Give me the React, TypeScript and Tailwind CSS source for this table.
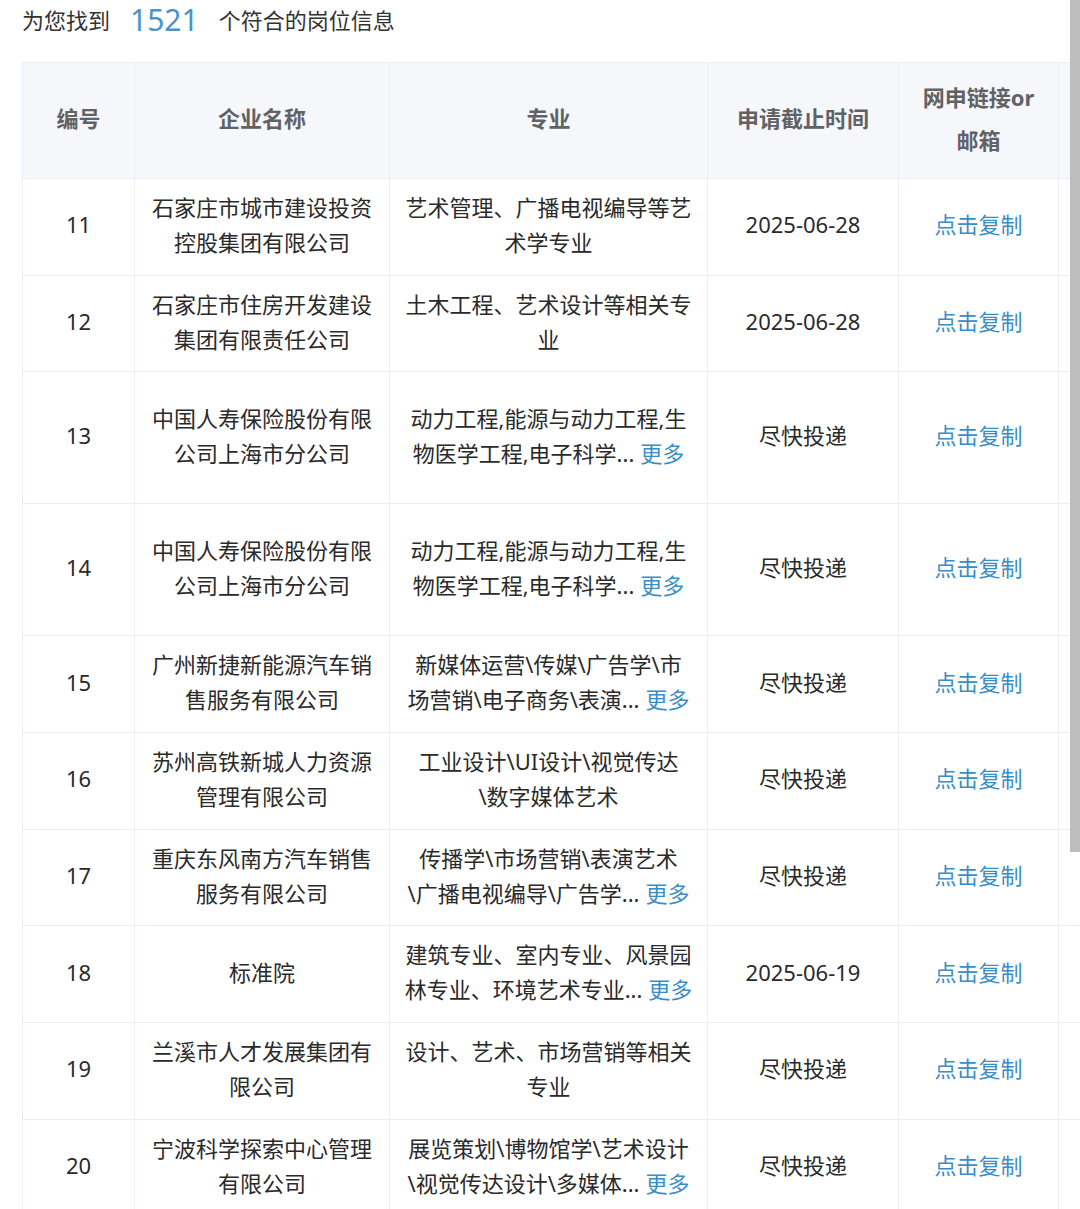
const FONT = "font-['Noto_Sans','Noto_Sans_CJK_SC',sans-serif]"

type Row = {
  no: number
  company: string[]
  major: string[]
  more?: boolean
  deadline: string
  tall?: boolean
}

const rows: Row[] = [
  { no: 11, company: ['石家庄市城市建设投资', '控股集团有限公司'], major: ['艺术管理、广播电视编导等艺', '术学专业'], deadline: '2025-06-28' },
  { no: 12, company: ['石家庄市住房开发建设', '集团有限责任公司'], major: ['土木工程、艺术设计等相关专', '业'], deadline: '2025-06-28' },
  { no: 13, company: ['中国人寿保险股份有限', '公司上海市分公司'], major: ['动力工程,能源与动力工程,生', '物医学工程,电子科学...'], more: true, deadline: '尽快投递', tall: true },
  { no: 14, company: ['中国人寿保险股份有限', '公司上海市分公司'], major: ['动力工程,能源与动力工程,生', '物医学工程,电子科学...'], more: true, deadline: '尽快投递', tall: true },
  { no: 15, company: ['广州新捷新能源汽车销', '售服务有限公司'], major: ['新媒体运营\\传媒\\广告学\\市', '场营销\\电子商务\\表演...'], more: true, deadline: '尽快投递' },
  { no: 16, company: ['苏州高铁新城人力资源', '管理有限公司'], major: ['工业设计\\UI设计\\视觉传达', '\\数字媒体艺术'], deadline: '尽快投递' },
  { no: 17, company: ['重庆东风南方汽车销售', '服务有限公司'], major: ['传播学\\市场营销\\表演艺术', '\\广播电视编导\\广告学...'], more: true, deadline: '尽快投递' },
  { no: 18, company: ['标准院'], major: ['建筑专业、室内专业、风景园', '林专业、环境艺术专业...'], more: true, deadline: '2025-06-19' },
  { no: 19, company: ['兰溪市人才发展集团有', '限公司'], major: ['设计、艺术、市场营销等相关', '专业'], deadline: '尽快投递' },
  { no: 20, company: ['宁波科学探索中心管理', '有限公司'], major: ['展览策划\\博物馆学\\艺术设计', '\\视觉传达设计\\多媒体...'], more: true, deadline: '尽快投递' },
]

const cols = 'grid grid-cols-[112px_255px_318px_191px_160px_200px]'
const cell = 'flex items-center justify-center border-r border-[#ebeef5] px-3 pb-[4px] text-center'

function Lines({ lines, more }: { lines: string[]; more?: boolean }) {
  return (
    <div className="leading-[35px]">
      {lines.map((line, i) => (
        <div key={i}>
          {line}
          {more && i === lines.length - 1 && <span className="ml-[6px] text-[#3a8dc6]">更多</span>}
        </div>
      ))}
    </div>
  )
}

export default function App() {
  return (
    <div className={`relative h-[1209px] w-[1080px] overflow-hidden bg-white ${FONT} text-[#2a2a2a]`}>
      <div className="flex h-[62px] items-center gap-[20px] pb-[22px] pl-[22px] text-[22px] text-[#333]">
        <span>为您找到</span>
        <span className="text-[30px] leading-none text-[#4a93c6]">1521</span>
        <span>个符合的岗位信息</span>
      </div>

      <div className="ml-[22px] w-[1236px] border-l border-t border-[#ebeef5] text-[22px]">
        <div className={`${cols} h-[116px] border-b border-[#ebeef5] bg-[#f5f7fa] font-bold text-[#606266]`}>
          <div className={cell}>编号</div>
          <div className={cell}>企业名称</div>
          <div className={cell}>专业</div>
          <div className={cell}>申请截止时间</div>
          <div className={`${cell} leading-[43px]`}>网申链接or<br />邮箱</div>
          <div className={cell}></div>
        </div>

        {rows.map(row => (
          <div key={row.no} className={`${cols} border-b border-[#ebeef5] ${row.tall ? 'h-[132px]' : 'h-[96.7px]'}`}>
            <div className={cell}>{row.no}</div>
            <div className={cell}><Lines lines={row.company} /></div>
            <div className={cell}><Lines lines={row.major} more={row.more} /></div>
            <div className={cell}>{row.deadline}</div>
            <div className={`${cell} text-[#3a8dc6]`}>点击复制</div>
            <div className={cell}></div>
          </div>
        ))}
      </div>

      {/* overlay scrollbar */}
      <div className="absolute right-0 top-0 h-[852px] w-[10px] bg-[#bdbdbd]" />
    </div>
  )
}
